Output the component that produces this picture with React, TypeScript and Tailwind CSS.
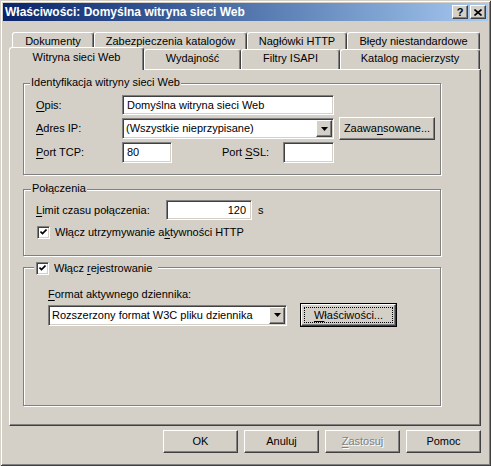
import React from "react";

const face = "bg-[#d4d0c8]";
const raised =
  "border border-t-white border-l-white border-r-[#404040] border-b-[#404040] shadow-[inset_-1px_-1px_#808080]";
const sunken =
  "border border-t-[#808080] border-l-[#808080] border-r-white border-b-white shadow-[inset_1px_1px_#404040,inset_-1px_-1px_#d4d0c8]";
const etched = "border border-[#808080] shadow-[inset_1px_1px_#fff,1px_1px_#fff]";

function U({ children }: { children: React.ReactNode }) {
  return <span className="underline decoration-1 underline-offset-[2px]">{children}</span>;
}

function Button({ children, className = "" }: { children: React.ReactNode; className?: string }) {
  return (
    <div className={`${face} ${raised} flex items-center justify-center h-[23px] ${className}`}>
      {children}
    </div>
  );
}

function DefaultButton({ children, className = "" }: { children: React.ReactNode; className?: string }) {
  return (
    <div className={`border border-black ${className}`}>
      <div className={`${face} ${raised} h-full p-[2px]`}>
        <div className="h-full border border-dotted border-black flex items-center justify-center">
          {children}
        </div>
      </div>
    </div>
  );
}

function Edit({ value, className = "", right }: { value: string; className?: string; right?: boolean }) {
  return (
    <div
      className={`${sunken} bg-white flex items-center ${right ? "justify-end pr-[5px]" : "pl-[4px]"} ${className}`}
    >
      {value}
    </div>
  );
}

function Arrow() {
  return (
    <svg width="7" height="4" viewBox="0 0 7 4">
      <polygon points="0,0 7,0 3.5,4" fill="#000" />
    </svg>
  );
}

function Combo({ value, className = "" }: { value: string; className?: string }) {
  return (
    <div className={`${sunken} bg-white flex p-[1px] h-[21px] ${className}`}>
      <div className="flex-1 flex items-center pl-[2px] whitespace-nowrap overflow-hidden">{value}</div>
      <div className={`${face} ${raised} w-[16px] h-full flex items-center justify-center`}>
        <Arrow />
      </div>
    </div>
  );
}

function Check() {
  return (
    <div className={`${sunken} bg-white w-[13px] h-[13px] flex items-center justify-center shrink-0`}>
      <svg width="7" height="7" viewBox="0 0 7 7">
        <path d="M0.5 2.5 L2.5 4.5 L6.5 0.5" stroke="#000" strokeWidth="1.6" fill="none" />
      </svg>
    </div>
  );
}

function Tab({ label, w, back, selected }: { label: string; w: string; back?: boolean; selected?: boolean }) {
  const h = back ? "h-[17px]" : selected ? "h-[23px] -mb-px relative z-10 pb-[3px]" : "h-[20px] pb-[2px]";
  return (
    <div
      className={`${face} ${w} ${h} shrink-0 flex items-center justify-center whitespace-nowrap border-t border-l border-r border-t-white border-l-white border-r-[#404040] rounded-t-[3px] shadow-[inset_-1px_0_#808080]`}
    >
      {label}
    </div>
  );
}

export default function App() {
  return (
    <div
      className={`${face} w-[491px] h-[466px] p-[3px] flex flex-col font-['Liberation_Sans',Arial,sans-serif] text-[11px] leading-[13px] text-black shadow-[inset_1px_1px_#d4d0c8,inset_-1px_-1px_#404040,inset_2px_2px_#fff,inset_-2px_-2px_#808080]`}
    >
      {/* title bar */}
      <div className="h-[18px] flex items-center pl-[2px] pr-[2px] bg-linear-to-r from-[#0a246a] to-[#a6caf0]">
        <span className="text-white font-bold text-[12px] flex-1">Właściwości: Domyślna witryna sieci Web</span>
        <div className={`${face} ${raised} w-[16px] h-[14px] flex items-center justify-center font-bold text-[11px] leading-none`}>
          ?
        </div>
        <div className={`${face} ${raised} w-[16px] h-[14px] ml-[2px] flex items-center justify-center`}>
          <svg width="8" height="7" viewBox="0 0 8 7">
            <path d="M0.5 0.5 L7.5 6.5 M7.5 0.5 L0.5 6.5" stroke="#000" strokeWidth="1.6" />
          </svg>
        </div>
      </div>

      <div className="flex flex-col pl-[6px] pr-[7px] pt-[11px]">
        {/* tabs */}
        <div className="flex pl-[3px]">
          <Tab back label="Dokumenty" w="w-[82px]" />
          <Tab back label="Zabezpieczenia katalogów" w="w-[153px]" />
          <Tab back label="Nagłówki HTTP" w="w-[100px]" />
          <Tab back label="Błędy niestandardowe" w="w-[133px]" />
        </div>
        <div className="flex items-end h-[20px]">
          <Tab selected label="Witryna sieci Web" w="w-[135px]" />
          <Tab label="Wydajność" w="w-[97px]" />
          <Tab label="Filtry ISAPI" w="w-[99px]" />
          <Tab label="Katalog macierzysty" w="w-[140px]" />
        </div>

        {/* panel */}
        <div className={`${face} ${raised} h-[357px] pl-[13px] pt-[13px]`}>
          {/* group 1 */}
          <div className={`relative ${etched} w-[418px] h-[92px] pl-[12px] pt-[11px]`}>
            <div className={`absolute left-[6px] top-[-8px] px-[1px] ${face}`}>Identyfikacja witryny sieci Web</div>
            <div className="flex items-center h-[20px]">
              <div className="w-[86px]">
                <U>O</U>pis:
              </div>
              <Edit value="Domyślna witryna sieci Web" className="w-[212px] h-[20px]" />
            </div>
            <div className="flex items-start mt-[3px]">
              <div className="w-[86px] h-[21px] flex items-center">
                <span>
                  <U>A</U>dres IP:
                </span>
              </div>
              <Combo value="(Wszystkie nieprzypisane)" className="w-[212px]" />
              <Button className="w-[96px] ml-[5px] -mt-px">
                <span>
                  Zaawa<U>n</U>sowane...
                </span>
              </Button>
            </div>
            <div className="flex items-center mt-[2px] h-[21px]">
              <div className="w-[86px]">
                <U>P</U>ort TCP:
              </div>
              <Edit value="80" className="w-[50px] h-[21px]" />
              <div className="ml-[50px] w-[61px]">
                Port <U>S</U>SL:
              </div>
              <Edit value="" className="w-[51px] h-[21px]" />
            </div>
          </div>

          {/* group 2 */}
          <div className={`relative ${etched} w-[418px] h-[67px] mt-[14px] pl-[12px] pt-[10px]`}>
            <div className={`absolute left-[7px] top-[-8px] px-[1px] ${face}`}>Połączenia</div>
            <div className="flex items-center h-[20px]">
              <div className="w-[130px]">
                <U>L</U>imit czasu połączenia:
              </div>
              <Edit value="120" right className="w-[86px] h-[20px]" />
              <div className="ml-[6px]">s</div>
            </div>
            <div className="flex items-center mt-[6px] pl-[1px]">
              <Check />
              <div className="ml-[5px]">
                Włącz utrzymywanie a<U>k</U>tywności HTTP
              </div>
            </div>
          </div>

          {/* group 3 */}
          <div className={`relative ${etched} w-[418px] h-[139px] mt-[11px] pl-[24px] pt-[20px]`}>
            <div className={`absolute left-[10px] top-[-6px] pl-[2px] pr-[6px] ${face} flex items-center`}>
              <Check />
              <div className="ml-[5px]">
                Włącz <U>r</U>ejestrowanie
              </div>
            </div>
            <div>
              <U>F</U>ormat aktywnego dziennika:
            </div>
            <div className="flex items-center mt-[2px]">
              <Combo value="Rozszerzony format W3C pliku dziennika" className="w-[239px]" />
              <DefaultButton className="w-[97px] h-[24px] ml-[13px]">
                <span>
                  <U>W</U>łaściwości...
                </span>
              </DefaultButton>
            </div>
          </div>
        </div>

        {/* bottom buttons */}
        <div className="flex justify-end gap-[6px] mt-[4px]">
          <Button className="w-[75px]">OK</Button>
          <Button className="w-[75px]">Anuluj</Button>
          <Button className="w-[75px] text-[#808080] [text-shadow:1px_1px_#fff]">
            <span>
              <U>Z</U>astosuj
            </span>
          </Button>
          <Button className="w-[75px]">Pomoc</Button>
        </div>
      </div>
    </div>
  );
}
